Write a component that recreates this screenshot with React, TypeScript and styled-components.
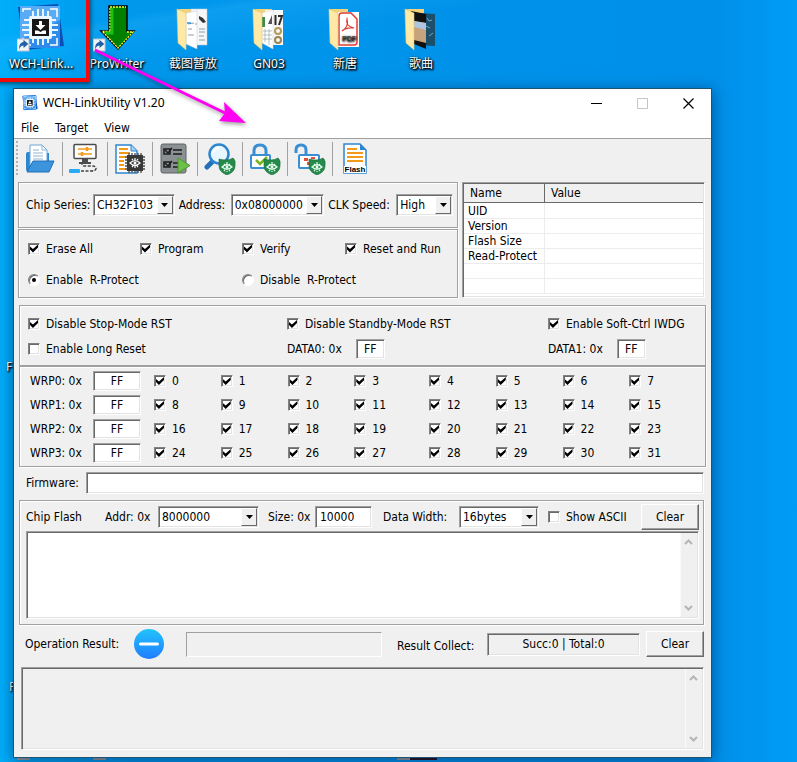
import React, { useState } from 'react';
import type { ReactNode } from 'react';
import styled, { createGlobalStyle, css } from 'styled-components';

const uiFont = '"DejaVu Sans Condensed", "Noto Sans", sans-serif';
const shellFont = '"Noto Sans", "Noto Sans CJK SC", sans-serif';

const GlobalStyle = createGlobalStyle`
  *, *::before, *::after { box-sizing: border-box; }
  body { margin: 0; background: #0091e8; }
`;

const sunken = css`
  border: 1px solid;
  border-color: #a0a0a0 #fff #fff #a0a0a0;
  box-shadow: inset 1px 1px 0 #696969, inset -1px -1px 0 #e3e3e3;
`;

/* ---------- desktop ---------- */

const Desktop = styled.div`
  position: relative;
  min-height: 100vh;
  overflow: hidden;
  background:
    linear-gradient(171deg, transparent 4%, rgba(60, 190, 255, 0.2) 5%, transparent 9%),
    linear-gradient(90deg, #00adf9 0%, #0098ec 14%, #0092ea 60%, #0090ea 90%, #009cf6 100%);
`;

const ShortcutRow = styled.div`
  display: grid;
  grid-template-columns: repeat(auto-fill, 76px);
  height: 88px;
  padding: 4px 0 0 3px;
`;

const Shortcut = styled.a`
  display: flex;
  flex-direction: column;
  align-items: center;
  gap: 3px;
  height: 76px;
  color: #fff;
  font: 12px/18px ${shellFont};
  text-decoration: none;
  white-space: nowrap;
  text-shadow: 1px 1px 2px #000, 1px 1px 2px #000, 0 1px 3px rgba(0, 0, 0, 0.8);

  svg { display: block; flex: none; }
`;

const HiddenLabel = styled.span<{ $left: number; $top: number }>`
  position: absolute;
  left: ${(p) => p.$left}px;
  top: ${(p) => p.$top}px;
  color: #fff;
  font: 12px/18px ${shellFont};
  text-shadow: 1px 1px 2px #000, 1px 1px 2px #000;
`;

const Highlight = styled.div`
  position: absolute;
  top: -4px;
  left: -4px;
  width: 94px;
  height: 86px;
  border: 4px solid #f00a0a;
  box-shadow: 1px 2px 4px rgba(0, 0, 0, 0.5);
  pointer-events: none;
`;

const ArrowMark = styled.svg`
  position: absolute;
  left: 90px;
  top: 44px;
  pointer-events: none;
  filter: drop-shadow(1px 2px 2px rgba(0, 0, 0, 0.4));
`;

const Peek = styled.svg`
  position: absolute;
  left: 0;
  bottom: 2px;
`;

/* ---------- window ---------- */

const Window = styled.main`
  position: relative;
  margin: 0 85px 4px 13px;
  border: 1px solid #1d5473;
  background: #f0f0f0;
  box-shadow: 0 3px 14px rgba(0, 20, 60, 0.5);
  color: #000;
  font: 12px/16px ${uiFont};
  white-space: nowrap;

  input, select, button, textarea { font: inherit; color: inherit; margin: 0; }
`;

const TitleBar = styled.header`
  display: flex;
  align-items: center;
  height: 28px;
  padding-left: 8px;
  background: #fff;
`;

const Title = styled.h1`
  flex: 1;
  margin: 0 0 0 5px;
  font: 12px/18px ${shellFont};
`;

const CaptionButton = styled.button`
  display: grid;
  place-items: center;
  width: 46px;
  height: 28px;
  padding: 0;
  border: 0;
  background: none;
`;

const MenuBar = styled.nav`
  display: flex;
  gap: 16px;
  height: 21px;
  padding-left: 7px;
  background: #fff;
`;

const MenuItem = styled.button`
  padding: 0;
  border: 0;
  background: none;
  line-height: 20px;
`;

const Toolbar = styled.div`
  display: flex;
  align-items: center;
  height: 44px;
  padding: 0 0 3px 2px;
  border-top: 1px solid #a0a0a0;
`;

const Gripper = styled.span`
  width: 2px;
  height: 36px;
  background: repeating-linear-gradient(180deg, #b4b4b4 0 2px, transparent 2px 4px);
`;

const ToolButton = styled.button`
  display: grid;
  place-items: center;
  width: 45px;
  height: 34px;
  padding: 0;
  border: 0;
  border-right: 1px solid #a0a0a0;
  background: none;

  &:last-child { border-right-color: transparent; }
`;

const Body = styled.div`
  padding: 0 6px 7px 4px;
`;

const TopArea = styled.div`
  display: grid;
  grid-template-columns: 440fr 243fr;
  gap: 4px;
`;

const Panel = styled.section`
  border: 1px solid #a0a0a0;
  box-shadow: inset 1px 1px 0 #fff, 1px 1px 0 #fff;
`;

const ConnectPanel = styled(Panel)`
  display: grid;
  grid-template-columns: 67px 86fr 52px 98fr 68px 61fr;
  align-items: center;
  height: 46px;
  padding-left: 7px;
  margin-bottom: 1px;
`;

const ComboBox = styled.span`
  position: relative;
  display: block;
  height: 22px;
  margin-right: 4px;
  background: #fff;
  ${sunken}
`;

const ComboSelect = styled.select`
  appearance: none;
  width: 100%;
  height: 20px;
  padding: 0 18px 0 3px;
  border: 0;
  background: transparent;
  outline: 0;
`;

const ComboArrow = styled.span`
  position: absolute;
  top: 1px;
  right: 1px;
  bottom: 1px;
  display: grid;
  place-items: center;
  width: 16px;
  border: 1px solid;
  border-color: #fff #696969 #696969 #fff;
  background: #f0f0f0;
  pointer-events: none;
`;

const ActionPanel = styled(Panel)`
  display: grid;
  grid-template-columns: 112fr 102fr 103fr 112fr;
  grid-template-rows: 31px 31px;
  align-items: center;
  height: 69px;
  padding: 3px 0 0 9px;
`;

const TickLabel = styled.label<{ $span?: number }>`
  display: flex;
  align-items: center;
  gap: 6px;
  white-space: pre;
  ${(p) => p.$span && css`grid-column: span ${p.$span};`}
`;

const Tick = styled.input`
  appearance: none;
  display: grid;
  place-items: center;
  flex: none;
  width: 12px;
  height: 12px;
  background: #fff;
  border: 1px solid;
  border-color: #808080 #fff #fff #808080;
  box-shadow: inset 1px 1px 0 #696969, inset -1px -1px 0 #e3e3e3;

  &:checked::before {
    content: '';
    width: 8px;
    height: 8px;
    background: #000;
    clip-path: polygon(0 25%, 37% 57%, 100% 0, 100% 38%, 37% 100%, 0 62%);
  }

  &[type='radio'] { border-radius: 50%; box-shadow: inset 1px 1px 0 #696969; }
  &[type='radio']:checked::before {
    width: 4px;
    height: 4px;
    border-radius: 50%;
    clip-path: none;
  }
`;

const InfoBox = styled.div`
  height: 116px;
  overflow: hidden;
  background: #fff;
  padding: 1px;
  ${sunken}
`;

const InfoTable = styled.table`
  width: 100%;
  table-layout: fixed;
  border-collapse: separate;
  border-spacing: 0;

  th, td { padding: 0 0 0 4px; text-align: left; font-weight: normal; }
  th {
    height: 19px;
    padding-left: 6px;
    line-height: 18px;
    background: #f0f0f0;
    border-bottom: 1px solid #696969;
  }
  th:first-child { width: 81px; border-right: 1px solid #696969; }
  td { height: 15px; line-height: 14px; border-bottom: 1px solid #ececec; }
  td:first-child { border-right: 1px solid #ececec; }
  tbody td:first-child { padding-left: 4px; }
  tbody tr:first-child td { height: 16px; padding-top: 1px; }
`;

const OptionPanel = styled(Panel)`
  display: grid;
  grid-template-columns: 259fr 261fr 157fr;
  grid-template-rows: 24px 26px;
  align-items: center;
  height: 61px;
  margin: 7px -1px 0 1px;
  padding: 6px 0 0 8px;
`;

const DataField = styled.label`
  display: flex;
  align-items: center;
  gap: 14px;
`;

const TextBox = styled.input`
  min-width: 0;
  width: 100%;
  height: 22px;
  padding: 0 4px;
  border-radius: 0;
  background: #fff;
  outline: 0;
  ${sunken}
`;

const ByteBox = styled(TextBox)`
  width: 29px;
  height: 20px;
  padding: 0;
  text-align: center;
`;

const ProtectPanel = styled(Panel)`
  height: 101px;
  margin: 0 -1px 0 1px;
  padding: 2px 0 0 10px;
`;

const ProtectRow = styled.div`
  display: grid;
  grid-template-columns: 63px 61px repeat(3, 67fr) 75fr repeat(3, 67fr) 76fr;
  align-items: center;
  height: 24px;
`;

const ProtectBox = styled(ByteBox)`
  width: 48px;
`;

const FirmwareRow = styled.div`
  display: grid;
  grid-template-columns: 60px 1fr;
  align-items: center;
  margin: 5px 0 6px;
  padding: 0 1px 0 8px;
`;

const FlashPanel = styled(Panel)`
  height: 125px;
  margin: 0 1px;
  padding: 2px 4px 0 6px;
`;

const FlashRow = styled.div`
  display: grid;
  grid-template-columns: 79px 53px 105fr 52px 68px 76px 84fr 98px 58px;
  align-items: center;
  height: 28px;

  label:nth-child(4), label:nth-child(8) { padding-left: 5px; }
`;

const SizeBox = styled(TextBox)`
  width: 57px;
`;

const PushButton = styled.button`
  height: 26px;
  padding: 0;
  border: 1px solid;
  border-color: #fff #696969 #696969 #fff;
  box-shadow: inset -1px -1px 0 #a0a0a0;
  background: #f0f0f0;
`;

const OutputFrame = styled.div<{ $height: number; $fill: string }>`
  display: flex;
  height: ${(p) => p.$height}px;
  padding: 1px;
  background: ${(p) => p.$fill};
  ${sunken}
`;

const OutputText = styled.textarea`
  flex: 1;
  min-width: 0;
  padding: 2px;
  border: 0;
  outline: 0;
  resize: none;
  background: transparent;
`;

const ScrollTrack = styled.div`
  display: flex;
  flex-direction: column;
  justify-content: space-between;
  width: 17px;
  padding-right: 1px;
  background: #f0f0f0;
  border-left: 1px solid #fafafa;
`;

const ScrollButton = styled.button`
  display: grid;
  place-items: center;
  height: 18px;
  padding: 0;
  border: 0;
  background: none;
`;

const ResultRow = styled.div`
  display: grid;
  grid-template-columns: 109px 52px 196fr 15px 90px 153fr 6px 58px;
  align-items: center;
  height: 30px;
  margin: 4px 0 8px;
  padding: 0 1px 0 7px;
`;

const ProgressBox = styled.output`
  height: 25px;
  border: 1px solid;
  border-color: #a0a0a0 #fff #fff #a0a0a0;
`;

const CountBox = styled.output`
  grid-column: 6;
  height: 23px;
  line-height: 20px;
  text-align: center;
  ${sunken}
`;

const CollectLabel = styled.span`
  grid-column: 5;
  padding-top: 3px;
`;

const ResultClear = styled(PushButton)`
  grid-column: 8;
`;

const LogArea = styled.div`
  margin: 0 1px 0 3px;
`;

/* ---------- drawings ---------- */

const ShortcutBadge = () => (
  <g>
    <rect x="0" y="35" width="12" height="12" fill="#f2f5f8" stroke="#b9c4cc" />
    <path d="M2.500 45.500c-1-4 1-7 4-7.500V35.800l4.800 4.200-4.800 4v-2.500c-2 0-3.500 1-4 4z" fill="#1f5fa8" />
  </g>
);

const LinkArt = ({ size, badge }: { size: number; badge?: boolean }) => (
  <svg width={size} height={size} viewBox="0 0 48 48">
    <path d="M1 3l40-3 6 42-40 4z" fill="#0b4fb4" />
    <rect x="3" y="2" width="40" height="42" rx="1" fill="#2f8ceb" />
    <path d="M3 2h40v14L3 36z" fill="#5aabf6" />
    <path d="M6 8V5h8M33 5h7v8M40 34v7h-7M14 41H6v-7" fill="none" stroke="#fff" strokeWidth="1.500" />
    <path d="M16 7v8M21 5v10M26 5v10M31 7v8M16 33v6M21 33v8M26 33v8M31 33v6M7 16h8M5 21h9M5 26h9M7 31h8M33 16h6M33 21h8M33 26h8M33 31h6" stroke="#e8f5ff" strokeWidth="2" />
    <rect x="12" y="12" width="23" height="23" rx="2" fill="#e9f6ff" />
    <rect x="15" y="15" width="17" height="17" fill="#161616" />
    <path d="M22 17h3v4h3.500l-5 5-5-5H22z" fill="#fff" />
    <path d="M18 26.500h3l2.500 1.500 2.500-1.500h3V30H18z" fill="#fff" />
    {badge && <ShortcutBadge />}
  </svg>
);

const DownArrowArt = () => (
  <svg width="48" height="48" viewBox="0 0 48 48">
    <path d="M16 2h18v25h7L25 45 8 27h8z" fill="#008000" stroke="#000" strokeWidth="1.500" />
    <path d="M17 27V3h16M9.500 27.500H17M10 28l15 16 15-16h-6" fill="none" stroke="#ffff2a" strokeWidth="1.300" strokeDasharray="2 1" />
    <path d="M19 4v25h-6" fill="none" stroke="#19c219" strokeWidth="3" />
    <ShortcutBadge />
  </svg>
);

const FolderArt = ({ children }: { children: ReactNode }) => (
  <svg width="48" height="48" viewBox="0 0 48 48">
    <path d="M8 6l3-1h16v34H10z" fill="#f2d27a" />
    {children}
    <path d="M8 5l9 4v37l-8-7z" fill="#ffe9a6" stroke="#e6c673" strokeWidth="0.600" />
  </svg>
);

const ScreenshotsArt = () => (
  <FolderArt>
    <path d="M22 5h16v36H22z" fill="#f4f6f8" stroke="#c5cbd0" strokeWidth="0.500" />
    <path d="M17 9l11-2v38l-11-5z" fill="#fff" stroke="#c5cbd0" strokeWidth="0.500" />
    <path d="M30 12l4 2 3 4-3 1-4-4z" fill="#333" />
    <path d="M19 20l6-1M19 25h4M26 20h2M19 31h6M30 25h6M30 28h6M30 32h5M30 36h6" stroke="#8aa0b0" />
    <path d="M18 19h4" stroke="#2c93e2" strokeWidth="1.500" />
  </FolderArt>
);

const SheetArt = () => (
  <FolderArt>
    <path d="M20 6h18v35H20z" fill="#f7f7f5" />
    <path d="M17 9l11-3v39l-11-6z" fill="#fff" stroke="#cfd1d3" strokeWidth="0.500" />
    <path d="M17 13h3v10h-3z" fill="#3c8d4a" />
    <path d="M23 20l4-9v9z" fill="#555" />
    <path d="M30.500 11v10M33 12h4l-3 9" fill="none" stroke="#2b2b2b" strokeWidth="2" />
    <circle cx="33" cy="27" r="3" fill="none" stroke="#b39a5b" strokeWidth="2" />
    <circle cx="33" cy="36" r="3" fill="none" stroke="#9a854f" strokeWidth="2" />
    <path d="M18 27h9M18 31h9M18 35h9M20 25v13M24 25v16" stroke="#9aa" strokeWidth="0.700" />
  </FolderArt>
);

const PdfArt = () => (
  <FolderArt>
    <path d="M17 8h21v35H17z" fill="#fff" />
    <path d="M18 12q0-3 3-3h9l6 6v23q0 3-3 3H18z" fill="#fff" stroke="#e23b34" strokeWidth="1.500" />
    <path d="M21 27q7-4 5-12-2 7 7 9-8-1-12 3z" fill="none" stroke="#e23b34" strokeWidth="1.200" />
    <text x="21" y="37" fontSize="7" fontFamily="Liberation Sans" fill="#222">PDF</text>
  </FolderArt>
);

const MusicArt = () => (
  <FolderArt>
    <path d="M22 9l16 1v32l-16-1z" fill="#1b4f6b" />
    <path d="M30 14l2 3 3-1M29 22l4 2M32 32l4-3" stroke="#78a7ba" fill="none" />
    <path d="M14 7l15 3v35l-12-5z" fill="#111" />
    <path d="M17 17l12 2v20l-12-3z" fill="#c6a27d" />
    <path d="M17 17l12 2v7l-12-3z" fill="#aec6df" />
  </FolderArt>
);

const Shield = () => (
  <g>
    <path d="M23 16q4-0 7-2 3 2 2 8 0 6-8 9-8-3-8-9 0-4 0-7 4 1 7 1z" transform="translate(-1 1)" fill="#258a4a" stroke="#1b6c39" strokeWidth="0.600" />
    <path d="M18 24q5-4.500 10 0-5 4.500-10 0zM20 21l1 1M23 19v2M26 21l-1 1M20 28l1-1M23 29v-1M26 28l-1-1" fill="none" stroke="#e6fff0" strokeWidth="1.200" />
    <circle cx="23" cy="24" r="1.500" fill="#e6fff0" />
  </g>
);

const toolSvg = (children: ReactNode) => (
  <svg width="32" height="32" viewBox="0 0 32 32">{children}</svg>
);

const tools: { name: string; art: ReactNode }[] = [
  {
    name: 'Open',
    art: toolSvg(
      <>
        <path d="M2 11q0-2 2-2h3v19H3q-1 0-1-2zM22 10h3v9h-3z" fill="#2e86cf" />
        <path d="M6 2h12l5 5v13L6 26z" fill="#fff" stroke="#6aa5d8" />
        <path d="M18 2v5h5M9 7h6M9 10h10M9 13h10M9 16h10" fill="none" stroke="#8fb4d6" />
        <path d="M9 18h21l-5 11H3z" fill="#3c94dc" stroke="#1d6fb6" />
      </>,
    ),
  },
  {
    name: 'Connect',
    art: toolSvg(
      <>
        <rect x="5" y="1.500" width="22" height="14" rx="1" fill="#fff" stroke="#4c4c4c" strokeWidth="1.500" />
        <path d="M9 6h14M9 11h14" stroke="#f39a1b" strokeWidth="1.500" />
        <path d="M18 4v4M13 9v4" stroke="#f39a1b" strokeWidth="2.500" />
        <path d="M13 16h6v3h3v2H10v-2h3z" fill="#4c4c4c" />
        <path d="M12 28h10q5 0 5-2.500T23 23h-7q-3 0-3-2" fill="none" stroke="#444" strokeWidth="1.500" strokeDasharray="3 1.500" />
        <rect x="0" y="26" width="11" height="4" rx="1" fill="#28aaf5" />
      </>,
    ),
  },
  {
    name: 'Chip',
    art: toolSvg(
      <>
        <path d="M2 2h15l6 6v22H2z" fill="#fff" stroke="#2e86cf" strokeWidth="1.500" />
        <path d="M17 2v6h6" fill="#a9d2f4" stroke="#2e86cf" />
        <path d="M5 6h9M5 10h11M5 14h6M5 18h5M5 22h5M5 26h6" stroke="#f39a1b" strokeWidth="2" />
        <path d="M15 10v20M18 10v20M21 10v20M24 10v20M27 10v20M11 14h20M11 17h20M11 20h20M11 23h20M11 26h20" stroke="#4b4b4b" strokeWidth="1.300" />
        <rect x="13" y="12" width="16" height="16" fill="#383838" />
        <path d="M16 20q5-5 10 0-5 5-10 0zM18 16l1 1M21 15v2M24 16l-1 1M18 24l1-1M21 25v-2M24 24l-1-1" stroke="#fff" fill="none" strokeWidth="1.200" />
        <circle cx="21" cy="20" r="1.500" fill="#fff" />
      </>,
    ),
  },
  {
    name: 'Execute',
    art: toolSvg(
      <>
        <rect x="2" y="1" width="25" height="29" rx="2" fill="#8b9093" stroke="#5e6366" />
        <path d="M5 6h6v5H5zM5 19h6v5H5z" fill="none" stroke="#1c1c1c" strokeWidth="1.500" />
        <path d="M6 7l3 3 4-5M6 20l3 3 4-5M14 7h9M14 11h9M14 20h7M14 24h7" fill="none" stroke="#1c1c1c" strokeWidth="1.500" />
        <path d="M19 15l12 7.500L19 30z" fill="#6cc04a" stroke="#48982b" />
      </>,
    ),
  },
  {
    name: 'Verify',
    art: toolSvg(
      <>
        <path d="M9 18l-6 6" stroke="#2372b9" strokeWidth="5" strokeLinecap="round" />
        <circle cx="15" cy="11" r="9.500" fill="#e8f6ff" stroke="#2e86cf" strokeWidth="2.500" />
        <path d="M9 10q2-5 6-5" stroke="#fff" strokeWidth="2" fill="none" />
        <Shield />
      </>,
    ),
  },
  {
    name: 'Lock',
    art: toolSvg(
      <>
        <path d="M5 13V8q0-6 6-6t6 6v5" fill="none" stroke="#3a8ed3" strokeWidth="3" />
        <rect x="2" y="12" width="19" height="13" rx="1" fill="#fff" stroke="#3a8ed3" strokeWidth="2" />
        <path d="M7 17l4 4 7-7" fill="none" stroke="#79b51e" strokeWidth="2.500" />
        <Shield />
      </>,
    ),
  },
  {
    name: 'Unlock',
    art: toolSvg(
      <>
        <path d="M2 10V7q0-5 5-5t5 5v6" fill="none" stroke="#3a8ed3" strokeWidth="3" />
        <rect x="5" y="12" width="20" height="13" rx="1" fill="#fff" stroke="#3a8ed3" strokeWidth="2" />
        <path d="M10 15h4v3h-4zM17 14h4v2h-4zM13 19h3v3h-3z" fill="#e64b3c" />
        <Shield />
      </>,
    ),
  },
  {
    name: 'Flash',
    art: toolSvg(
      <>
        <path d="M5 1h16l6 6v23H5z" fill="#fff" stroke="#2e86cf" strokeWidth="1.500" />
        <path d="M21 1v6h6z" fill="#2e86cf" />
        <path d="M8 6h10M8 10h16M8 14h16M8 18h16" stroke="#f39a1b" strokeWidth="2" />
        <path d="M5 23h22v7H5z" fill="#fff" />
        <text x="16" y="29" textAnchor="middle" fontSize="8" fontFamily="Liberation Sans" fontWeight="bold">Flash</text>
      </>,
    ),
  },
];

const Chevron = ({ down }: { down?: boolean }) => (
  <svg width="9" height="6" viewBox="0 0 9 6">
    <path d={down ? 'M1 1l3.500 3.500L8 1' : 'M1 5l3.500-3.500L8 5'} fill="none" stroke="#b5b5b5" strokeWidth="2" />
  </svg>
);

/* ---------- parts ---------- */

const Combo = ({ id, value }: { id: string; value: string }) => (
  <ComboBox>
    <ComboSelect id={id} defaultValue={value}>
      <option>{value}</option>
    </ComboSelect>
    <ComboArrow>
      <svg width="7" height="4" viewBox="0 0 7 4"><path d="M0 0h7L3.500 4z" /></svg>
    </ComboArrow>
  </ComboBox>
);

const Check = ({ text, on = true }: { text: string; on?: boolean }) => (
  <TickLabel>
    <Tick type="checkbox" defaultChecked={on} />
    {text}
  </TickLabel>
);

const Output = ({ height, fill, name }: { height: number; fill: string; name: string }) => (
  <OutputFrame $height={height} $fill={fill}>
    <OutputText aria-label={name} readOnly />
    <ScrollTrack>
      <ScrollButton aria-label="Scroll up"><Chevron /></ScrollButton>
      <ScrollButton aria-label="Scroll down"><Chevron down /></ScrollButton>
    </ScrollTrack>
  </OutputFrame>
);

const shortcuts: { name: string; art: ReactNode }[] = [
  { name: 'WCH-Link...', art: <LinkArt size={48} badge /> },
  { name: 'ProWriter', art: <DownArrowArt /> },
  { name: '截图暂放', art: <ScreenshotsArt /> },
  { name: 'GN03', art: <SheetArt /> },
  { name: '新唐', art: <PdfArt /> },
  { name: '歌曲', art: <MusicArt /> },
];

const infoRows = ['UID', 'Version', 'Flash Size', 'Read-Protect', '', ''];

export default function App() {
  const [protect, setProtect] = useState('enable');

  return (
    <Desktop>
      <GlobalStyle />
      <ShortcutRow>
        {shortcuts.map((s) => (
          <Shortcut href="#" key={s.name}>
            {s.art}
            {s.name}
          </Shortcut>
        ))}
      </ShortcutRow>
      <HiddenLabel $left={6} $top={358}>F</HiddenLabel>
      <HiddenLabel $left={9} $top={678}>F</HiddenLabel>
      <Peek width="440" height="3" viewBox="0 0 440 3">
        <path d="M17 0h13v3H17zM93 0h13v3H93zM397 0h13v3h-13z" fill="#9c9a9c" />
        <path d="M410 0h27v3h-27z" fill="#2a1020" />
      </Peek>

      <Window>
        <TitleBar>
          <LinkArt size={16} />
          <Title>WCH-LinkUtility V1.20</Title>
          <CaptionButton aria-label="Minimize">
            <svg width="11" height="11"><path d="M0 5.500h11" stroke="#000" /></svg>
          </CaptionButton>
          <CaptionButton aria-label="Maximize" disabled>
            <svg width="11" height="11"><path d="M.5.5h10v10H.5z" fill="none" stroke="#c4c4c4" /></svg>
          </CaptionButton>
          <CaptionButton aria-label="Close">
            <svg width="11" height="11"><path d="M.5.5l10 10M10.500.5l-10 10" stroke="#000" strokeWidth="1.200" /></svg>
          </CaptionButton>
        </TitleBar>
        <MenuBar>
          <MenuItem>File</MenuItem>
          <MenuItem>Target</MenuItem>
          <MenuItem>View</MenuItem>
        </MenuBar>
        <Toolbar>
          <Gripper />
          {tools.map((t) => (
            <ToolButton key={t.name} aria-label={t.name}>{t.art}</ToolButton>
          ))}
        </Toolbar>

        <Body>
          <TopArea>
            <div>
              <ConnectPanel>
                <label htmlFor="series">Chip Series:</label>
                <Combo id="series" value="CH32F103" />
                <label htmlFor="address">Address:</label>
                <Combo id="address" value="0x08000000" />
                <label htmlFor="speed">CLK Speed:</label>
                <Combo id="speed" value="High" />
              </ConnectPanel>
              <ActionPanel>
                <Check text="Erase All" />
                <Check text="Program" />
                <Check text="Verify" />
                <Check text="Reset and Run" />
                <TickLabel $span={2}>
                  <Tick type="radio" name="protect" checked={protect === 'enable'} onChange={() => setProtect('enable')} />
                  {'Enable  R-Protect'}
                </TickLabel>
                <TickLabel $span={2}>
                  <Tick type="radio" name="protect" checked={protect === 'disable'} onChange={() => setProtect('disable')} />
                  {'Disable  R-Protect'}
                </TickLabel>
              </ActionPanel>
            </div>
            <InfoBox>
              <InfoTable>
                <thead>
                  <tr><th>Name</th><th>Value</th></tr>
                </thead>
                <tbody>
                  {infoRows.map((name, i) => (
                    <tr key={i}><td>{name}</td><td /></tr>
                  ))}
                </tbody>
              </InfoTable>
            </InfoBox>
          </TopArea>

          <OptionPanel>
            <Check text="Disable Stop-Mode RST" />
            <Check text="Disable Standby-Mode RST" />
            <Check text="Enable Soft-Ctrl IWDG" />
            <Check text="Enable Long Reset" on={false} />
            <DataField>DATA0: 0x<ByteBox defaultValue="FF" /></DataField>
            <DataField>DATA1: 0x<ByteBox defaultValue="FF" /></DataField>
          </OptionPanel>

          <ProtectPanel>
            {[0, 1, 2, 3].map((row) => (
              <ProtectRow key={row}>
                <label htmlFor={`wrp${row}`}>{`WRP${row}: 0x`}</label>
                <ProtectBox id={`wrp${row}`} defaultValue="FF" />
                {Array.from({ length: 8 }, (_, i) => (
                  <Check key={i} text={String(row * 8 + i)} />
                ))}
              </ProtectRow>
            ))}
          </ProtectPanel>

          <FirmwareRow>
            <label htmlFor="firmware">Firmware:</label>
            <TextBox id="firmware" />
          </FirmwareRow>

          <FlashPanel>
            <FlashRow>
              <span>Chip Flash</span>
              <label htmlFor="addr">Addr: 0x</label>
              <Combo id="addr" value="8000000" />
              <label htmlFor="size">Size: 0x</label>
              <SizeBox id="size" defaultValue="10000" />
              <label htmlFor="width">Data Width:</label>
              <Combo id="width" value="16bytes" />
              <Check text="Show ASCII" on={false} />
              <PushButton>Clear</PushButton>
            </FlashRow>
            <Output height={88} fill="#fff" name="Chip flash data" />
          </FlashPanel>

          <ResultRow>
            <span>Operation Result:</span>
            <svg width="30" height="30" viewBox="0 0 30 30">
              <defs>
                <linearGradient id="disc" x1="0" y1="0" x2="0" y2="1">
                  <stop offset="0" stopColor="#22c4fb" />
                  <stop offset="1" stopColor="#1f7cff" />
                </linearGradient>
              </defs>
              <circle cx="15" cy="15" r="15" fill="url(#disc)" />
              <path d="M6.500 15h17" stroke="#fff" strokeWidth="3" strokeLinecap="round" />
            </svg>
            <ProgressBox />
            <CollectLabel>Result Collect:</CollectLabel>
            <CountBox>Succ:0 | Total:0</CountBox>
            <ResultClear>Clear</ResultClear>
          </ResultRow>

          <LogArea>
            <Output height={83} fill="#f0f0f0" name="Log" />
          </LogArea>
        </Body>
      </Window>

      <Highlight />
      <ArrowMark width="160" height="84" viewBox="0 0 160 84">
        <path d="M5 6l130 63" stroke="#ff00f0" strokeWidth="3" />
        <path d="M156 79l-27-2 6-8-1-11z" fill="#ff00f0" />
      </ArrowMark>
    </Desktop>
  );
}
